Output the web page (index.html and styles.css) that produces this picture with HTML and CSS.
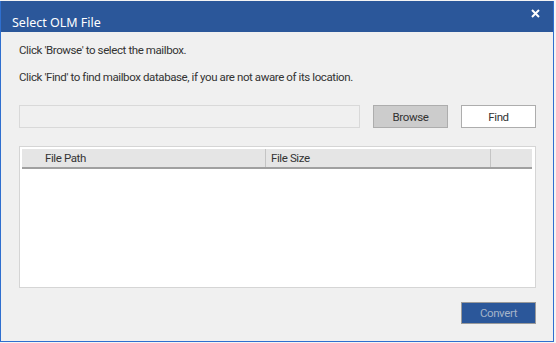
FILE: index.html
```html
<!DOCTYPE html>
<html lang="en">
<head>
  <meta charset="UTF-8" />
  <title>Select OLM File</title>
  <link rel="stylesheet" href="styles.css">
</head>
<body>
  <div class="dialog">
    <div class="titlebar">
      <span class="title">Select OLM File</span>
      <svg class="close" width="9" height="9" viewBox="0 0 9 9">
        <path d="M1 1 L8 8 M8 1 L1 8" stroke="#fff" stroke-width="2" />
      </svg>
    </div>
    <div class="content">
      <p class="hint">Click 'Browse' to select the mailbox.</p>
      <p class="hint">Click 'Find' to find mailbox database, if you are not aware of its location.</p>

      <div class="picker">
        <div class="path-box"></div>
        <button class="btn btn-browse">Browse</button>
        <button class="btn btn-find">Find</button>
      </div>

      <div class="file-list">
        <div class="list-head">
          <div class="col col-path">File Path</div>
          <div class="col col-size">File Size</div>
          <div class="col col-rest"></div>
        </div>
      </div>

      <div class="footer">
        <button class="btn btn-convert">Convert</button>
      </div>
    </div>
  </div>
</body>
</html>
```

FILE: styles.css
```css
* {
  box-sizing: border-box;
}
body {
  margin: 0;
  background-color: #f4f4f4;
  font-family: Roboto, 'Segoe UI', sans-serif;
  font-size: 11.5px;
  letter-spacing: -0.4px;
}
.dialog {
  margin-top: 1px;
  width: 554px;
  height: 341px;
  border: 1px solid #2f6fcf;
  border-top: none;
  background-color: #f0f0f0;
  display: flex;
  flex-direction: column;
}
.titlebar {
  height: 31px;
  background-color: #2b579a;
  color: #fff;
  display: flex;
  align-items: center;
  justify-content: space-between;
  padding: 0 13px 0 11px;
}
.title {
  font-family: 'Noto Sans', sans-serif;
  font-size: 12.5px;
  letter-spacing: 0;
  padding-top: 11px;
}
.close {
  margin-top: -6px;
}
.content {
  flex: 1;
  display: flex;
  flex-direction: column;
  padding: 0 17px 0 18px;
  color: #333;
}
.hint {
  margin: 0;
  line-height: 16px;
}
.hint:first-child {
  margin-top: 10px;
}
.hint + .hint {
  margin-top: 11px;
}
.picker {
  display: flex;
  margin-top: 20px;
  height: 23px;
}
.path-box {
  width: 341px;
  border: 1px solid #d9d9d9;
  background-color: #f0f0f0;
}
.btn {
  font-family: inherit;
  font-size: 11.5px;
  letter-spacing: -0.4px;
  color: #333;
  border: 1px solid #adadad;
  padding: 0;
}
.btn-browse {
  width: 75px;
  margin-left: 13px;
  background-color: #cccccc;
}
.btn-find {
  width: 75px;
  margin-left: 13px;
  background-color: #fff;
}
.file-list {
  margin-top: 18px;
  height: 142px;
  border: 1px solid #d5d5d5;
  background-color: #fff;
  padding: 2px 3px 0 2px;
}
.list-head {
  display: flex;
  height: 20px;
  background-color: #e5e5e5;
  border-bottom: 2px solid #a0a0a0;
}
.col {
  line-height: 18px;
  color: #333;
}
.col-path {
  width: 243px;
  padding-left: 23px;
}
.col-size {
  width: 225px;
  padding-left: 5px;
  border-left: 1px solid #c4c4c4;
}
.col-rest {
  flex: 1;
  border-left: 1px solid #c4c4c4;
}
.footer {
  display: flex;
  justify-content: flex-end;
  margin-top: 14px;
}
.btn-convert {
  width: 75px;
  height: 22px;
  background-color: #2b579a;
  color: #a3b3c9;
  border: 1px solid #9a9a9a;
}
```
